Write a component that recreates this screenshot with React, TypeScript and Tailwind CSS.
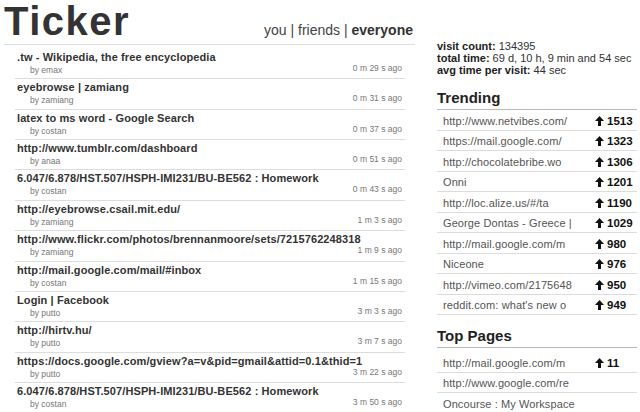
import type { ReactNode } from 'react'

type FeedItem = { title: string; user: string; ago: string }
type RankItem = { label: string; count?: number }

const feed: FeedItem[] = [
  { title: '.tw - Wikipedia, the free encyclopedia', user: 'emax', ago: '0 m 29 s ago' },
  { title: 'eyebrowse | zamiang', user: 'zamiang', ago: '0 m 31 s ago' },
  { title: 'latex to ms word - Google Search', user: 'costan', ago: '0 m 37 s ago' },
  { title: 'http://www.tumblr.com/dashboard', user: 'anaa', ago: '0 m 51 s ago' },
  { title: '6.047/6.878/HST.507/HSPH-IMI231/BU-BE562 : Homework', user: 'costan', ago: '0 m 43 s ago' },
  { title: 'http://eyebrowse.csail.mit.edu/', user: 'zamiang', ago: '1 m 3 s ago' },
  { title: 'http://www.flickr.com/photos/brennanmoore/sets/7215762248318', user: 'zamiang', ago: '1 m 9 s ago' },
  { title: 'http://mail.google.com/mail/#inbox', user: 'costan', ago: '1 m 15 s ago' },
  { title: 'Login | Facebook', user: 'putto', ago: '3 m 3 s ago' },
  { title: 'http://hirtv.hu/', user: 'putto', ago: '3 m 7 s ago' },
  { title: 'https://docs.google.com/gview?a=v&pid=gmail&attid=0.1&thid=1', user: 'putto', ago: '3 m 22 s ago' },
  { title: '6.047/6.878/HST.507/HSPH-IMI231/BU-BE562 : Homework', user: 'costan', ago: '3 m 50 s ago' },
]

const trending: RankItem[] = [
  { label: 'http://www.netvibes.com/', count: 1513 },
  { label: 'https://mail.google.com/', count: 1323 },
  { label: 'http://chocolatebribe.wo', count: 1306 },
  { label: 'Onni', count: 1201 },
  { label: 'http://loc.alize.us/#/ta', count: 1190 },
  { label: 'George Dontas - Greece |', count: 1029 },
  { label: 'http://mail.google.com/m', count: 980 },
  { label: 'Niceone', count: 976 },
  { label: 'http://vimeo.com/2175648', count: 950 },
  { label: "reddit.com: what's new o", count: 949 },
]

const topPages: RankItem[] = [
  { label: 'http://mail.google.com/m', count: 11 },
  { label: 'http://www.google.com/re' },
  { label: 'Oncourse : My Workspace' },
]

function UpArrow() {
  return (
    <svg width="9" height="10" viewBox="0 0 9 10" className="shrink-0">
      <polygon points="4.5,0 9,5 6,5 6,10 3,10 3,5 0,5" fill="#111" />
    </svg>
  )
}

function RankList({ items, className = '' }: { items: RankItem[]; className?: string }) {
  return (
    <ul className={className}>
      {items.map((item, i) => (
        <li key={i} className="flex h-[20.5px] items-center justify-between border-b border-[#dcdcdc] pl-[6px] pt-[2px] text-[11px] leading-[14px]">
          <span className="whitespace-nowrap tracking-[0.1px] text-[#555]">{item.label}</span>
          {item.count !== undefined && (
            <span className="flex w-[42px] items-center gap-[3px] text-[11.5px] font-bold text-[#111]">
              <UpArrow />
              {item.count}
            </span>
          )}
        </li>
      ))}
    </ul>
  )
}

function SideHeading({ children }: { children: ReactNode }) {
  return (
    <h2 className="border-b border-[#bbb] pb-[2px] text-[15px] font-bold leading-[18px] text-[#222]">{children}</h2>
  )
}

export default function App() {
  return (
    <div className="flex w-[640px] h-[412px] overflow-hidden bg-white font-['Liberation_Sans',Arial,sans-serif] text-[#333]">
      {/* feed */}
      <div className="w-[415px] shrink-0 pl-[4px]">
        <div className="flex h-[45px] items-baseline justify-between border-b border-[#ddd] pr-[2px]">
          <h1 className="text-[40px] font-bold leading-[42px] tracking-[1.5px] text-[#333]">Ticker</h1>
          <div className="text-[14px] text-[#444]">
            you | friends | <span className="font-bold text-[#333]">everyone</span>
          </div>
        </div>

        <ul className="ml-[11px] mr-[10px] mt-[4px]">
          {feed.map((item, i) => (
            <li key={i} className="border-b border-[#ddd] pt-[1px] pb-[2.36px]">
              <div className="whitespace-nowrap pl-[2px] text-[11px] font-bold leading-[14px] tracking-[0.1px] text-[#333]">
                {item.title}
              </div>
              <div className="flex items-baseline justify-between pl-[15px] pr-[3px] text-[8.5px] leading-[12px] text-[#777]">
                <span>by {item.user}</span>
                <span className="-translate-y-[2px]">{item.ago}</span>
              </div>
            </li>
          ))}
        </ul>
      </div>

      {/* stats */}
      <div className="ml-[22px] w-[200px] shrink-0 pt-[40px]">
        <div className="text-[11px] leading-[12px] text-[#333]">
          <div><b className="text-[#222]">visit count:</b> 134395</div>
          <div className="whitespace-nowrap"><b className="text-[#222]">total time:</b> 69 d, 10 h, 9 min and 54 sec</div>
          <div><b className="text-[#222]">avg time per visit:</b> 44 sec</div>
        </div>

        <div className="mt-[13px]">
          <SideHeading>Trending</SideHeading>
          <RankList items={trending} />
        </div>

        <div className="mt-[12px]">
          <SideHeading>Top Pages</SideHeading>
          <RankList items={topPages} className="mt-[4px]" />
        </div>
      </div>
    </div>
  )
}
